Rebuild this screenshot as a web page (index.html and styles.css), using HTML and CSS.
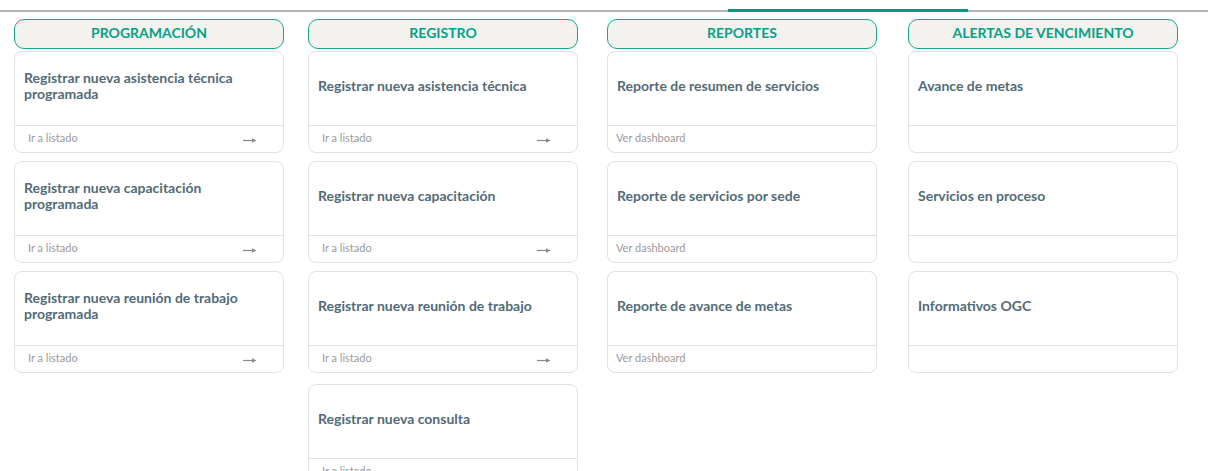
FILE: index.html
```html
<!DOCTYPE html>
<html lang="es">
<head>
<meta charset="utf-8">
<title>Menú</title>
<link rel="stylesheet" href="styles.css">
</head>
<body>
<div class="tabline">
  <div class="seg seg-a"></div>
  <div class="seg seg-active"></div>
  <div class="seg seg-b"></div>
</div>
<div class="board">
  <section class="col">
    <h2 class="col-head">PROGRAMACIÓN</h2>
    <div class="card"><div class="card-body">Registrar nueva asistencia técnica programada</div><div class="card-foot"><span class="link">Ir a listado</span><svg class="arrow" width="14" height="7" viewBox="0 0 14 7"><path d="M0 3.5H10" stroke="#888" stroke-width="1.2"/><path d="M9 1.2L13.5 3.5L9 5.8Z" fill="#888"/></svg></div></div>
    <div class="card"><div class="card-body">Registrar nueva capacitación programada</div><div class="card-foot"><span class="link">Ir a listado</span><svg class="arrow" width="14" height="7" viewBox="0 0 14 7"><path d="M0 3.5H10" stroke="#888" stroke-width="1.2"/><path d="M9 1.2L13.5 3.5L9 5.8Z" fill="#888"/></svg></div></div>
    <div class="card"><div class="card-body">Registrar nueva reunión de trabajo programada</div><div class="card-foot"><span class="link">Ir a listado</span><svg class="arrow" width="14" height="7" viewBox="0 0 14 7"><path d="M0 3.5H10" stroke="#888" stroke-width="1.2"/><path d="M9 1.2L13.5 3.5L9 5.8Z" fill="#888"/></svg></div></div>
  </section>
  <section class="col">
    <h2 class="col-head">REGISTRO</h2>
    <div class="card"><div class="card-body">Registrar nueva asistencia técnica</div><div class="card-foot"><span class="link">Ir a listado</span><svg class="arrow" width="14" height="7" viewBox="0 0 14 7"><path d="M0 3.5H10" stroke="#888" stroke-width="1.2"/><path d="M9 1.2L13.5 3.5L9 5.8Z" fill="#888"/></svg></div></div>
    <div class="card"><div class="card-body">Registrar nueva capacitación</div><div class="card-foot"><span class="link">Ir a listado</span><svg class="arrow" width="14" height="7" viewBox="0 0 14 7"><path d="M0 3.5H10" stroke="#888" stroke-width="1.2"/><path d="M9 1.2L13.5 3.5L9 5.8Z" fill="#888"/></svg></div></div>
    <div class="card"><div class="card-body">Registrar nueva reunión de trabajo</div><div class="card-foot"><span class="link">Ir a listado</span><svg class="arrow" width="14" height="7" viewBox="0 0 14 7"><path d="M0 3.5H10" stroke="#888" stroke-width="1.2"/><path d="M9 1.2L13.5 3.5L9 5.8Z" fill="#888"/></svg></div></div>
    <div class="card card-extra"><div class="card-body">Registrar nueva consulta</div><div class="card-foot"><span class="link">Ir a listado</span><svg class="arrow" width="14" height="7" viewBox="0 0 14 7"><path d="M0 3.5H10" stroke="#888" stroke-width="1.2"/><path d="M9 1.2L13.5 3.5L9 5.8Z" fill="#888"/></svg></div></div>
  </section>
  <section class="col">
    <h2 class="col-head">REPORTES</h2>
    <div class="card"><div class="card-body">Reporte de resumen de servicios</div><div class="card-foot"><span class="link link-plain">Ver dashboard</span></div></div>
    <div class="card"><div class="card-body">Reporte de servicios por sede</div><div class="card-foot"><span class="link link-plain">Ver dashboard</span></div></div>
    <div class="card"><div class="card-body">Reporte de avance de metas</div><div class="card-foot"><span class="link link-plain">Ver dashboard</span></div></div>
  </section>
  <section class="col">
    <h2 class="col-head">ALERTAS DE VENCIMIENTO</h2>
    <div class="card"><div class="card-body">Avance de metas</div><div class="card-foot"></div></div>
    <div class="card"><div class="card-body">Servicios en proceso</div><div class="card-foot"></div></div>
    <div class="card"><div class="card-body">Informativos OGC</div><div class="card-foot"></div></div>
  </section>
</div>
</body>
</html>
```

FILE: styles.css
```css
html, body {
  margin: 0;
  padding: 0;
  background: #ffffff;
  font-family: Lato, "Noto Sans", sans-serif;
  overflow: hidden;
}

.tabline {
  display: flex;
  align-items: flex-end;
  width: 1208px;
  height: 12px;
}

.seg {
  height: 2px;
  background: #b3b3b3;
}

.seg-a { width: 728px; }
.seg-active { width: 240px; height: 3px; background: #009a84; }
.seg-b { flex: 1; }

.board {
  display: grid;
  grid-template-columns: 294px 299px 301px 270px;
  padding: 7px 0 0 14px;
  align-items: start;
}

.col {
  width: 270px;
  display: flex;
  flex-direction: column;
}

.col-head {
  margin: 0 0 2px;
  height: 28px;
  border: 1px solid #14a78f;
  border-radius: 10px;
  background: #f3f2ef;
  color: #06a087;
  font-size: 14px;
  font-weight: 700;
  line-height: 26px;
  text-align: center;
}

.card {
  border: 1px solid #e1e1e1;
  border-radius: 8px;
  margin-bottom: 8px;
  background: #fff;
}

.card-extra {
  margin-top: 3px;
}

.card-body {
  height: 73px;
  padding: 0 12px 5px 9px;
  box-sizing: border-box;
  display: flex;
  align-items: center;
  color: #526b78;
  font-size: 14px;
  font-weight: 700;
  line-height: 16px;
}

.card-foot {
  height: 27px;
  box-sizing: border-box;
  border-top: 1px solid #e1e1e1;
  display: flex;
  align-items: center;
  justify-content: space-between;
  padding: 0 26px 3px 13px;
}

.link {
  color: #9a9a9a;
  font-size: 11px;
}

.link-plain {
  margin-left: -5px;
}

.arrow {
  display: block;
  margin-top: 6px;
}
```
